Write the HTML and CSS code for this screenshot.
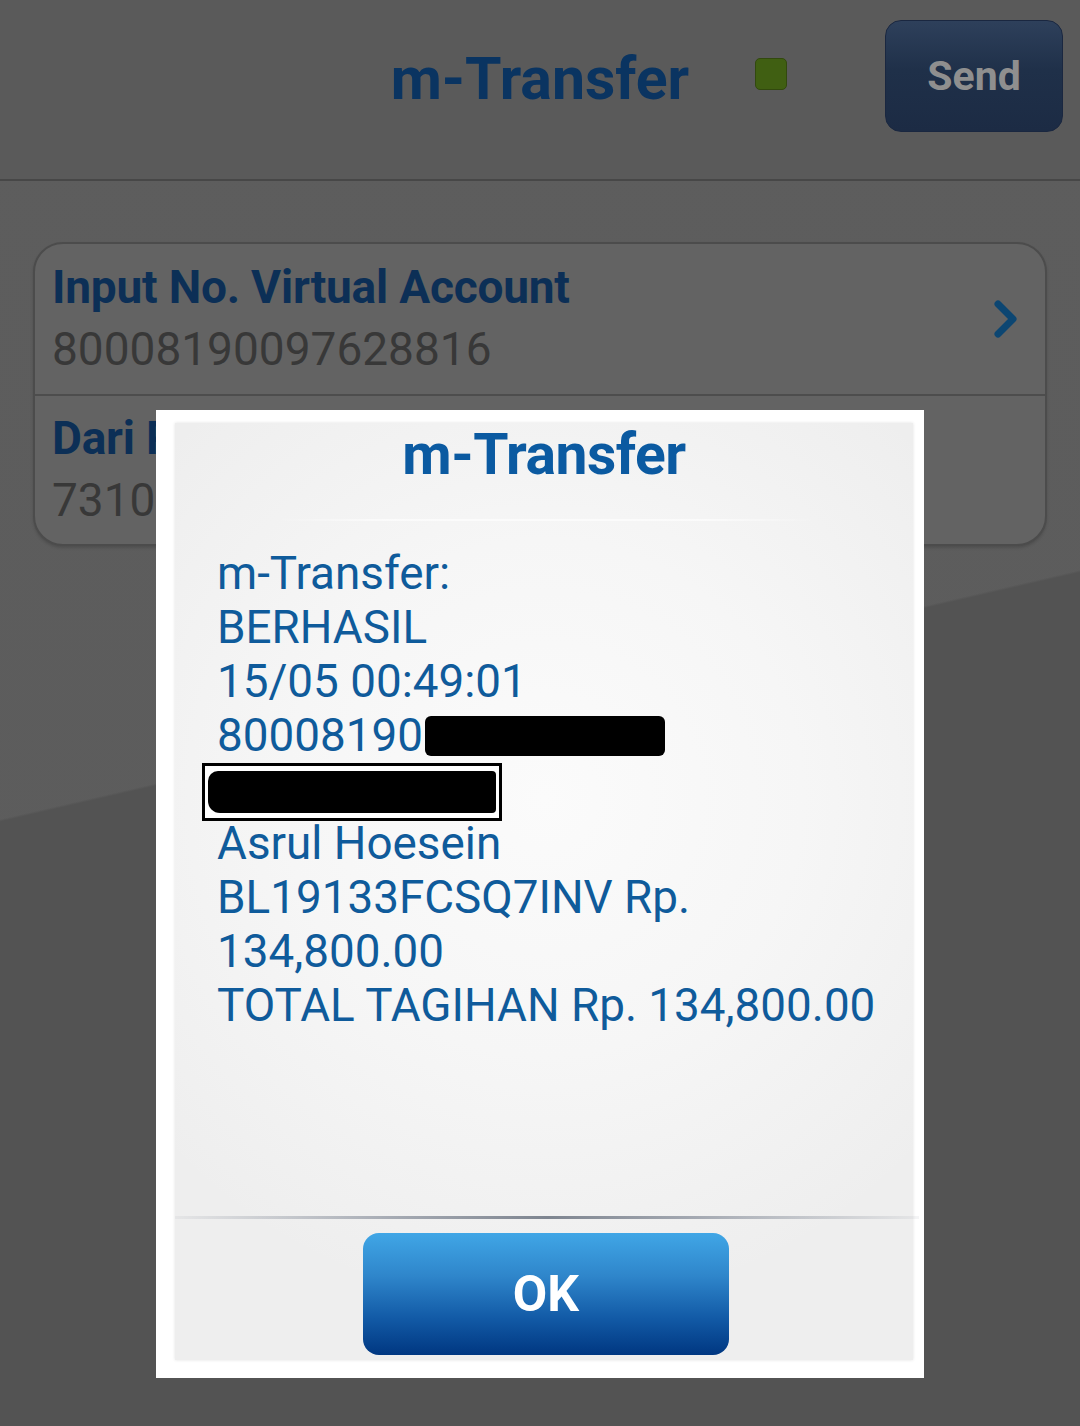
FILE: index.html
```html
<!DOCTYPE html>
<html>
<head>
<meta charset="utf-8">
<link rel="stylesheet" href="styles.css">
</head>
<body>
<div class="screen">
  <header class="topbar">
    <div class="side"></div>
    <h1 class="title">m-Transfer</h1>
    <div class="side right">
      <span class="status"></span>
      <button class="send">Send</button>
    </div>
  </header>
  <main class="content">
    <div class="card">
      <div class="row">
        <div class="row-text">
          <div class="label">Input No. Virtual Account</div>
          <div class="value">80008190097628816</div>
        </div>
        <svg class="chev" width="30" height="40" viewBox="0 0 30 40"><path d="M7 5 L22 20 L7 35" fill="none" stroke="#0c4672" stroke-width="7" stroke-linejoin="round" stroke-linecap="round"/></svg>
      </div>
      <div class="row">
        <div class="row-text">
          <div class="label">Dari Rekening</div>
          <div class="value">7310000000</div>
        </div>
      </div>
    </div>
  </main>
  <div class="dialog">
    <div class="panel">
      <div class="dlg-title">m-Transfer</div>
      <div class="dlg-sep-top"></div>
      <div class="message">
        <div class="line">m-Transfer:</div>
        <div class="line">BERHASIL</div>
        <div class="line">15/05 00:49:01</div>
        <div class="line">80008190<span class="redact-a"></span></div>
        <div class="line"><span class="redact-b"><span class="scribble"></span></span></div>
        <div class="line">Asrul Hoesein</div>
        <div class="line">BL19133FCSQ7INV Rp.</div>
        <div class="line">134,800.00</div>
        <div class="line">TOTAL TAGIHAN Rp. 134,800.00</div>
      </div>
      <div class="footer">
        <div class="footer-sep"></div>
        <button class="ok">OK</button>
      </div>
    </div>
  </div>
</div>
</body>
</html>
```

FILE: styles.css
```css
* { box-sizing: border-box; }
html, body { margin: 0; padding: 0; }
body {
  width: 1080px;
  height: 1426px;
  overflow: hidden;
  background: #565656;
  font-family: Roboto, "Liberation Sans", sans-serif;
}
.screen {
  position: relative;
  width: 1080px;
  height: 1426px;
  background:
    linear-gradient(167deg, transparent 0 48.9%, #535353 49.05% 100%),
    linear-gradient(180deg, #5d5d5d 0, #5c5c5c 100%);
}
.topbar {
  height: 181px;
  background: #5a5a5a;
  border-bottom: 2px solid #474747;
  display: grid;
  grid-template-columns: 1fr auto 1fr;
  align-items: start;
}
.title {
  margin: 0;
  padding-top: 44px;
  font-size: 59px;
  font-weight: 700;
  color: #0a3461;
  letter-spacing: 0px;
  line-height: 70px;
}
.side.right {
  display: flex;
  align-items: flex-start;
}
.status {
  width: 32px;
  height: 32px;
  margin-top: 58px;
  margin-left: 66px;
  background: #405f12;
  border: 1px solid #32490e;
  border-radius: 5px;
}
.send {
  margin-left: auto;
  margin-right: 17px;
  margin-top: 20px;
  width: 178px;
  height: 112px;
  border-radius: 16px;
  border: 1px solid #1a2740;
  background: linear-gradient(180deg, #2e405b 0%, #1f3049 45%, #1c2b44 100%);
  color: #8f8f8f;
  font-family: Roboto, sans-serif;
  font-size: 41px;
  font-weight: 700;
  padding: 0;
}
.content {
  padding: 61px 33px 0;
}
.card {
  height: 304px;
  border: 2px solid #4c4c4c;
  border-radius: 30px;
  background: #636363;
  box-shadow: 0 2px 3px rgba(0,0,0,0.15);
  overflow: hidden;
}
.row {
  height: 150px;
  display: flex;
  align-items: center;
  padding: 0 24px 0 17px;
}
.row + .row {
  border-top: 2px solid #4d4d4d;
}
.row-text { flex: 1; }
.label {
  font-size: 46px;
  font-weight: 700;
  color: #0c2f56;
  line-height: 56px;
  letter-spacing: -0.2px;
}
.value {
  font-size: 46px;
  color: #383838;
  line-height: 60px;
  margin-top: 4px;
}
.chev { display: block; }

/* dialog overlay */
.dialog {
  position: absolute;
  left: 156px;
  top: 410px;
  width: 768px;
  height: 968px;
  background: #ffffff;
  padding: 13px 11px 18px 19px;
}
.panel {
  height: 100%;
  background:
    radial-gradient(ellipse 70% 55% at 50% 40%, #fbfbfb 0%, #f6f6f6 50%, rgba(240,240,240,0) 100%),
    #eeeeee;
  box-shadow: 0 0 3px rgba(0,0,0,0.12);
  display: flex;
  flex-direction: column;
}
.dlg-title {
  text-align: center;
  font-size: 57px;
  font-weight: 700;
  color: #0b5aa1;
  line-height: 64px;
  padding-top: 0px;
  height: 96px;
  letter-spacing: -0.5px;
}
.dlg-sep-top {
  height: 2px;
  margin: 0 95px 0 100px;
  background: linear-gradient(90deg, rgba(255,255,255,0), rgba(255,255,255,0.6) 20%, rgba(255,255,255,0.6) 80%, rgba(255,255,255,0));
}
.message {
  flex: 1;
  padding: 26px 0 0 42px;
}
.line {
  font-size: 45.8px;
  line-height: 54px;
  height: 54px;
  color: #0f5b9b;
  white-space: nowrap;
  display: flex;
  align-items: center;
}
.redact-a {
  display: inline-block;
  width: 240px;
  height: 40px;
  background: #000;
  border-radius: 6px;
  margin-left: 2px;
}
.redact-b {
  display: inline-block;
  width: 300px;
  height: 58px;
  margin-left: -15px;
  margin-top: 4px;
  border: 3px solid #000;
  background: #fff;
  padding: 5px 3px;
}
.scribble {
  display: block;
  width: 100%;
  height: 100%;
  background: #000;
  border-radius: 10px 4px 4px 12px;
}
.footer {
  height: 144px;
  display: flex;
  flex-direction: column;
  align-items: center;
}
.footer-sep {
  align-self: stretch;
  height: 3px;
  margin-right: -6px;
  background: linear-gradient(90deg, rgba(150,155,165,0.1), #a4a9b2 30%, #7e8590 50%, #a4a9b2 70%, rgba(150,155,165,0.1));
}
.ok {
  margin-top: 14px;
  margin-left: 4px;
  width: 366px;
  height: 122px;
  border: none;
  border-radius: 16px;
  background: linear-gradient(180deg, #40a6e6 0%, #2f86cb 35%, #125aa6 70%, #003781 100%);
  color: #ffffff;
  font-family: Roboto, sans-serif;
  font-size: 50px;
  font-weight: 700;
  padding: 0;
}
```
